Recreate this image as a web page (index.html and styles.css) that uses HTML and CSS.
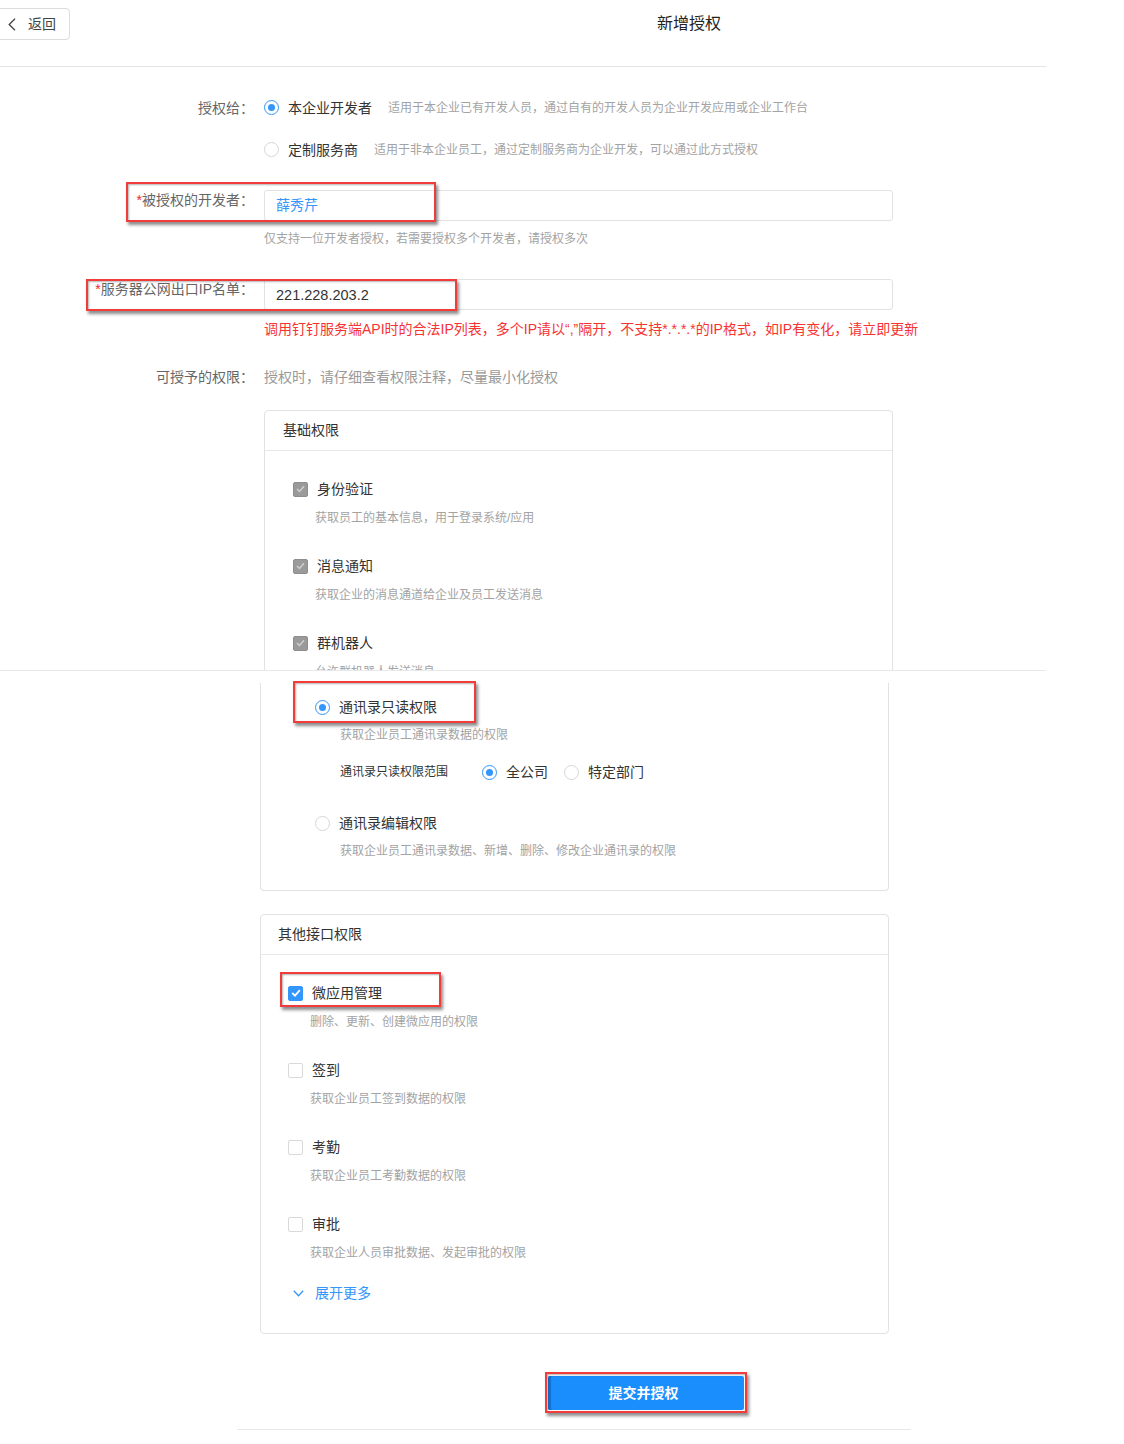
FILE: index.html
```html
<!DOCTYPE html>
<html lang="zh-CN">
<head>
<meta charset="utf-8">
<title>新增授权</title>
<link rel="stylesheet" href="styles.css">
</head>
<body>
<div class="shot-top">
  <header class="topbar">
    <button class="back"><svg class="back-ico" width="8" height="13" viewBox="0 0 8 13"><polyline points="7,0.8 1.2,6.5 7,12.2" fill="none" stroke="#444" stroke-width="1.3"/></svg><span>返回</span></button>
    <h1 class="title">新增授权</h1>
  </header>

  <div class="form">
    <div class="row row-radio r1">
      <div class="label">授权给：</div>
      <div class="field"><span class="radio on"></span><span class="opt">本企业开发者</span><span class="opt-desc">适用于本企业已有开发人员，通过自有的开发人员为企业开发应用或企业工作台</span></div>
    </div>
    <div class="row row-radio r2">
      <div class="label"></div>
      <div class="field"><span class="radio"></span><span class="opt">定制服务商</span><span class="opt-desc">适用于非本企业员工，通过定制服务商为企业开发，可以通过此方式授权</span></div>
    </div>
    <div class="row row-input r3">
      <div class="label"><span class="req">*</span>被授权的开发者：</div>
      <div class="input val-blue">薛秀芹</div>
      <div class="mark mark-a1"></div>
    </div>
    <div class="row r-hint">
      <div class="label"></div>
      <div class="hint">仅支持一位开发者授权，若需要授权多个开发者，请授权多次</div>
    </div>
    <div class="row row-input r4">
      <div class="label"><span class="req">*</span>服务器公网出口IP名单：</div>
      <div class="input val-dark">221.228.203.2</div>
      <div class="mark mark-a2"></div>
    </div>
    <div class="row r-red">
      <div class="label"></div>
      <div class="red-tip">调用钉钉服务端API时的合法IP列表，多个IP请以“,”隔开，不支持*.*.*.*的IP格式，如IP有变化，请立即更新</div>
    </div>
    <div class="row r5">
      <div class="label">可授予的权限：</div>
      <div class="gray-tip">授权时，请仔细查看权限注释，尽量最小化授权</div>
    </div>

    <section class="card card-a">
      <div class="card-head">基础权限</div>
      <div class="card-body">
        <div class="item">
          <div class="item-main"><span class="cb cb-dis"><svg width="9" height="8" viewBox="0 0 9 8"><polyline points="1,4 3.5,6.5 8,1.2" fill="none" stroke="#cfcfcf" stroke-width="1.5"/></svg></span><span class="item-name">身份验证</span></div>
          <div class="item-desc">获取员工的基本信息，用于登录系统/应用</div>
        </div>
        <div class="item">
          <div class="item-main"><span class="cb cb-dis"><svg width="9" height="8" viewBox="0 0 9 8"><polyline points="1,4 3.5,6.5 8,1.2" fill="none" stroke="#cfcfcf" stroke-width="1.5"/></svg></span><span class="item-name">消息通知</span></div>
          <div class="item-desc">获取企业的消息通道给企业及员工发送消息</div>
        </div>
        <div class="item">
          <div class="item-main"><span class="cb cb-dis"><svg width="9" height="8" viewBox="0 0 9 8"><polyline points="1,4 3.5,6.5 8,1.2" fill="none" stroke="#cfcfcf" stroke-width="1.5"/></svg></span><span class="item-name">群机器人</span></div>
          <div class="item-desc">允许群机器人发送消息</div>
        </div>
      </div>
    </section>
  </div>
</div>

<div class="shot-bottom">
  <section class="card-cont">
    <div class="sub-main"><span class="radio on"></span><span class="item-name">通讯录只读权限</span><div class="mark mark-a3"></div></div>
    <div class="sub-desc">获取企业员工通讯录数据的权限</div>
    <div class="scope">
      <span class="scope-label">通讯录只读权限范围</span>
      <span class="radio on"></span><span class="scope-opt">全公司</span>
      <span class="radio r-gap"></span><span class="scope-opt">特定部门</span>
    </div>
    <div class="sub-main sub-2"><span class="radio"></span><span class="item-name">通讯录编辑权限</span></div>
    <div class="sub-desc">获取企业员工通讯录数据、新增、删除、修改企业通讯录的权限</div>
  </section>

  <section class="card card-b">
    <div class="card-head">其他接口权限</div>
    <div class="card-body">
      <div class="item">
        <div class="item-main rel"><span class="cb cb-on"><svg width="10" height="8" viewBox="0 0 10 8"><polyline points="1.2,4 4,6.6 8.8,1.2" fill="none" stroke="#fff" stroke-width="1.8"/></svg></span><span class="item-name">微应用管理</span><div class="mark mark-a4"></div></div>
        <div class="item-desc">删除、更新、创建微应用的权限</div>
      </div>
      <div class="item">
        <div class="item-main"><span class="cb"></span><span class="item-name">签到</span></div>
        <div class="item-desc">获取企业员工签到数据的权限</div>
      </div>
      <div class="item">
        <div class="item-main"><span class="cb"></span><span class="item-name">考勤</span></div>
        <div class="item-desc">获取企业员工考勤数据的权限</div>
      </div>
      <div class="item item-last">
        <div class="item-main"><span class="cb"></span><span class="item-name">审批</span></div>
        <div class="item-desc">获取企业人员审批数据、发起审批的权限</div>
      </div>
      <div class="more"><svg width="11" height="7" viewBox="0 0 11 7"><polyline points="0.8,0.8 5.5,5.8 10.2,0.8" fill="none" stroke="#3296fa" stroke-width="1.3"/></svg><span>展开更多</span></div>
    </div>
  </section>

  <button class="submit">提交并授权<span class="mark mark-a5"></span></button>
  <div class="foot-line"></div>
</div>
</body>
</html>
```

FILE: styles.css
```css
* { box-sizing: border-box; margin: 0; padding: 0; }
body {
  margin: 0;
  width: 1124px;
  background: #fff;
  font-family: "Liberation Sans", "Noto Sans CJK SC", sans-serif;
  font-size: 14px;
  color: #333;
}

/* ---------- top screenshot part ---------- */
.shot-top {
  width: 1046px;
  height: 671px;
  overflow: hidden;
  border-bottom: 1px solid #e8e8e8;
}
.topbar {
  height: 67px;
  border-bottom: 1px solid #e4e4e4;
  display: flex;
  align-items: flex-start;
}
.back {
  margin-top: 8px;
  margin-left: -5px;
  width: 75px;
  height: 32px;
  border: 1px solid #dcdcdc;
  border-radius: 4px;
  background: #fff;
  display: flex;
  align-items: center;
  gap: 12px;
  padding-left: 12px;
  font-family: inherit;
  font-size: 14px;
  line-height: 20px;
  color: #444;
}
.back-ico { display: block; }
.title {
  margin-left: 587px;
  margin-top: 14px;
  font-size: 16px;
  line-height: 20px;
  font-weight: 400;
  color: #222;
}

.row {
  display: grid;
  grid-template-columns: 254px 629px;
  column-gap: 10px;
  position: relative;
}
.label {
  text-align: right;
  line-height: 20px;
  color: #666;
  white-space: nowrap;
}
.req { color: #f5222d; }

.row-radio { height: 31px; align-items: center; }
.r1 { margin-top: 25px; }
.r2 { margin-top: 11px; }
.field { display: flex; align-items: center; }
.opt { margin-left: 9px; color: #333; line-height: 20px; }
.opt-desc { margin-left: 16px; font-size: 12px; color: #a3a3a3; line-height: 18px; white-space: nowrap; }

.radio {
  width: 15px;
  height: 15px;
  border: 1px solid #d6d6d6;
  border-radius: 50%;
  background: #fff;
  display: inline-flex;
  align-items: center;
  justify-content: center;
  flex: none;
}
.radio.on { border-color: #3296fa; }
.radio.on::after {
  content: "";
  width: 7px;
  height: 7px;
  border-radius: 50%;
  background: #3296fa;
}

.row-input { align-items: start; }
.r3 { margin-top: 25px; }
.r4 { margin-top: 31px; }
.input {
  height: 31px;
  border: 1px solid #e2e2e2;
  border-radius: 3px;
  padding-left: 11px;
  line-height: 29px;
  font-size: 14px;
}
.val-blue { color: #3296fa; }
.val-dark { color: #333; font-size: 14.5px; padding-top: 1px; }

.r-hint { margin-top: 9px; }
.hint { font-size: 12px; line-height: 18px; color: #a3a3a3; }
.r-red { margin-top: 9px; }
.red-tip { font-size: 14px; line-height: 20px; color: #f53333; white-space: nowrap; }
.r5 { margin-top: 28px; }
.gray-tip { line-height: 20px; color: #999; }

/* ---------- cards ---------- */
.card {
  width: 629px;
  border: 1px solid #e2e2e2;
  border-radius: 4px;
}
.card-a { margin-left: 264px; margin-top: 23px; }
.card-b { margin-top: 23px; }
.card-head {
  height: 40px;
  border-bottom: 1px solid #e8e8e8;
  padding-left: 18px;
  line-height: 39px;
  color: #333;
}
.card-b .card-head { padding-left: 17px; }
.card-body { padding: 28px 0 0 28px; }
.card-b .card-body { padding: 28px 0 30px 27px; }
.item { margin-bottom: 29px; }
.item-last { margin-bottom: 0; }
.item-main {
  display: flex;
  align-items: center;
  height: 20px;
  gap: 9px;
}
.rel { position: relative; }
.item-name { line-height: 20px; color: #333; }
.item-desc {
  margin-top: 10px;
  margin-left: 22px;
  font-size: 12px;
  line-height: 18px;
  color: #a3a3a3;
}

.cb {
  width: 15px;
  height: 15px;
  border: 1px solid #d9d9d9;
  border-radius: 2px;
  background: #fff;
  display: inline-flex;
  align-items: center;
  justify-content: center;
  flex: none;
}
.cb-dis { background: #9a9a9a; border-color: #8e8e8e; }
.cb-on { background: #3296fa; border-color: #3296fa; }
.cb svg { display: block; }

/* ---------- bottom screenshot part ---------- */
.shot-bottom { padding-left: 260px; }
.card-cont {
  width: 629px;
  margin-top: 12px;
  border: 1px solid #e2e2e2;
  border-top: none;
  border-radius: 0 0 4px 4px;
  padding: 14px 0 30px 54px;
}
.sub-main {
  position: relative;
  display: flex;
  align-items: center;
  height: 20px;
  gap: 9px;
}
.sub-2 { margin-top: 31px; }
.sub-desc {
  margin-top: 9px;
  margin-left: 25px;
  font-size: 12px;
  line-height: 18px;
  color: #a3a3a3;
}
.scope {
  margin-top: 18px;
  margin-left: 25px;
  display: flex;
  align-items: center;
  height: 20px;
}
.scope-label { font-size: 12px; color: #333; line-height: 18px; margin-right: 34px; }
.scope-opt { margin-left: 9px; line-height: 20px; color: #333; }
.r-gap { margin-left: 16px; }

.more {
  margin-top: 21px;
  margin-left: 5px;
  display: flex;
  align-items: center;
  gap: 11px;
  height: 20px;
  color: #3296fa;
  line-height: 20px;
}
.more svg { display: block; }

.submit {
  position: relative;
  display: block;
  margin-top: 42px;
  margin-left: 288px;
  width: 196px;
  height: 34px;
  border: none;
  border-radius: 2px;
  background: #1a8efd;
  box-shadow: inset 3px 0 0 #1570d0;
  color: #fff;
  font-family: inherit;
  font-size: 14px;
  font-weight: 700;
  line-height: 34px;
  padding-right: 5px;
}
.foot-line {
  margin-top: 19px;
  margin-left: -23px;
  width: 674px;
  border-top: 1px solid #e8e8e8;
}

/* ---------- red annotation overlays ---------- */
.mark {
  position: absolute;
  border: 2px solid #f23c3c;
  box-shadow: 2px 3px 3px rgba(0, 0, 0, 0.45), inset 1px 1px 2px rgba(0, 0, 0, 0.3);
  pointer-events: none;
}
.mark-a1 { left: 126px; top: -8px; width: 310px; height: 40px; }
.mark-a2 { left: 86px; top: 0; width: 371px; height: 32px; }
.mark-a3 { left: -22px; top: -16px; width: 183px; height: 42px; }
.mark-a4 { left: -8px; top: -11px; width: 161px; height: 35px; }
.mark-a5 { left: -3px; top: -4px; width: 202px; height: 41px; }
```
